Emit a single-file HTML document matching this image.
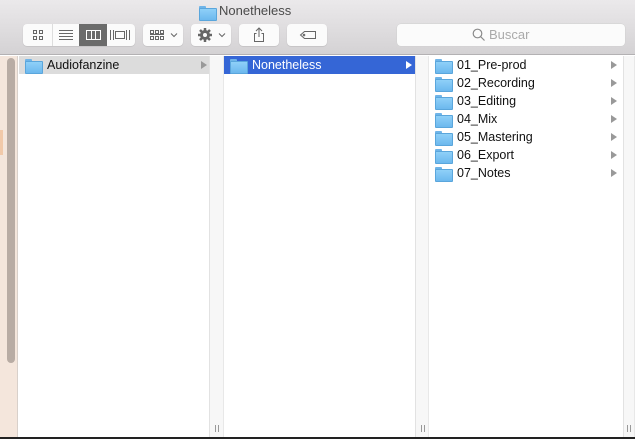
<!DOCTYPE html><html><head><style>
*{margin:0;padding:0;box-sizing:border-box}
body{width:635px;height:439px;overflow:hidden;background:#fff;font-family:"Liberation Sans",sans-serif;position:relative}
.tb{position:absolute;left:0;top:0;width:635px;height:55px;background:linear-gradient(#ebe9eb,#d4d2d4);border-bottom:1px solid #b3b1b3}
.title{position:absolute;top:3px;left:199px;font-size:13px;color:#4a4a4a}
.btn{position:absolute;top:24px;height:22px;background:#fbfbfb;border-radius:4px;box-shadow:0 0.5px 1px rgba(0,0,0,.15)}
.seg{position:absolute;top:0;height:22px}
.f{position:absolute;width:16px;height:13px}
.f:before{content:"";position:absolute;left:0;top:0;width:7px;height:3px;background:#6fb4e8;border-radius:1px 1px 0 0}
.f:after{content:"";position:absolute;left:0;top:2px;width:16px;height:11px;background:linear-gradient(#8fd0f8,#6cb8ee);border:1px solid #5aa6dc;border-radius:1px}
.row{position:absolute;height:18px;font-size:12.5px;line-height:18px;color:#111}
.row .f{left:6px;top:3px}
.row span{position:absolute;left:28px;top:0}
.ar{position:absolute;width:0;height:0;border-left:6px solid #999;border-top:4px solid transparent;border-bottom:4px solid transparent;top:5px}
.div{position:absolute;top:56px;height:381px;background:#f7f7f7;border-left:1px solid #e2e2e2;border-right:1px solid #e8e8e8}
.div i{position:absolute;bottom:5px;left:5px;width:1px;height:7px;background:#999;box-shadow:3px 0 0 #999}
</style></head><body>
<div class="tb">
<div class="title"><div class="f" style="left:0;top:3px;position:absolute"></div><span style="position:absolute;left:20px;top:0;white-space:nowrap">Nonetheless</span></div>
<div class="btn" style="left:23px;width:112px">
 <div class="seg" style="left:29px;width:1px;background:#ddd"></div>
 <div class="seg" style="left:56px;width:28px;background:#6b6b6b"></div>
 <svg width="112" height="22" style="position:absolute;left:0;top:0" fill="none" stroke="#666" stroke-width="1">
  <rect x="10.5" y="6.5" width="3" height="3"/><rect x="16.5" y="6.5" width="3" height="3"/><rect x="10.5" y="12.5" width="3" height="3"/><rect x="16.5" y="12.5" width="3" height="3"/>
  <path d="M36 6.5h14M36 9.5h14M36 12.5h14M36 15.5h14"/>
  <rect x="63.5" y="6.5" width="14" height="9" stroke="#fff"/><path d="M68.5 7v8M72.5 7v8" stroke="#fff"/>
  <path d="M87.5 6v10M90.5 6v10M103.5 6v10M106.5 6v10"/><rect x="92.5" y="7.5" width="9" height="7"/>
 </svg>
</div>
<div class="btn" style="left:143px;width:40px"><svg width="40" height="22" fill="none" stroke="#666"><rect x="7.5" y="6.5" width="3" height="3"/><rect x="12.5" y="6.5" width="3" height="3"/><rect x="17.5" y="6.5" width="3" height="3"/><rect x="7.5" y="12.5" width="3" height="3"/><rect x="12.5" y="12.5" width="3" height="3"/><rect x="17.5" y="12.5" width="3" height="3"/><path d="M7 10.5h14"/><path d="M28 9.5l3 3 3-3"/></svg></div>
<div class="btn" style="left:191px;width:40px"><svg width="40" height="22"><g fill="#666"><circle cx="14" cy="11" r="5"/><g stroke="#666" stroke-width="2.5"><path d="M14 4v14M7 11h14M9 6l10 10M19 6l-10 10"/></g></g><circle cx="14" cy="11" r="2" fill="#fbfbfb"/><path d="M28 9.5l3 3 3-3" fill="none" stroke="#666"/></svg></div>
<div class="btn" style="left:239px;width:40px"><svg width="40" height="22" fill="none" stroke="#666"><path d="M17.5 9.5h-2v8h9v-8h-2M20 4v9M17 7l3-3 3 3"/></svg></div>
<div class="btn" style="left:287px;width:40px"><svg width="40" height="22" fill="none" stroke="#666"><path d="M13.5 11l4-3.5h11v7h-11z"/><circle cx="17" cy="11" r=".8"/></svg></div>
<div class="btn" style="left:397px;width:228px;box-shadow:0 0 0 .5px #d0d0d0"><svg width="14" height="14" style="position:absolute;left:75px;top:4px" fill="none" stroke="#8a8a8a" stroke-width="1.2"><circle cx="5.5" cy="5.5" r="4.3"/><path d="M8.5 8.5l4 4"/></svg><span style="position:absolute;left:92px;top:3px;font-size:13px;color:#aaa">Buscar</span></div>
</div>
<div style="position:absolute;left:0;top:56px;width:18px;height:381px;background:#f4e6dc;border-right:1px solid #d8d0ca"></div>
<div style="position:absolute;left:0;top:130px;width:3px;height:25px;background:#f1c9a9"></div>
<div style="position:absolute;left:7px;top:58px;width:8px;height:305px;background:#b8aca4;border-radius:4px"></div>
<div class="row" style="left:19px;top:56px;width:190px;background:#dcdcdc"><div class="f"></div><span>Audiofanzine</span><div class="ar" style="left:182px"></div></div>
<div class="div" style="left:209px;width:15px"><i></i></div>
<div class="row" style="left:224px;top:56px;width:191px;background:#3566d6;color:#fff"><div class="f"></div><span>Nonetheless</span><div class="ar" style="left:182px;border-left-color:#fff"></div></div>
<div class="div" style="left:415px;width:14px"><i></i></div>
<div class="row" style="left:429px;top:56px;width:194px"><div class="f"></div><span>01_Pre-prod</span><div class="ar" style="left:182px"></div></div>
<div class="row" style="left:429px;top:74px;width:194px"><div class="f"></div><span>02_Recording</span><div class="ar" style="left:182px"></div></div>
<div class="row" style="left:429px;top:92px;width:194px"><div class="f"></div><span>03_Editing</span><div class="ar" style="left:182px"></div></div>
<div class="row" style="left:429px;top:110px;width:194px"><div class="f"></div><span>04_Mix</span><div class="ar" style="left:182px"></div></div>
<div class="row" style="left:429px;top:128px;width:194px"><div class="f"></div><span>05_Mastering</span><div class="ar" style="left:182px"></div></div>
<div class="row" style="left:429px;top:146px;width:194px"><div class="f"></div><span>06_Export</span><div class="ar" style="left:182px"></div></div>
<div class="row" style="left:429px;top:164px;width:194px"><div class="f"></div><span>07_Notes</span><div class="ar" style="left:182px"></div></div>
<div class="div" style="left:623px;width:12px"><i style="left:3px"></i></div>
<div style="position:absolute;left:0;top:437px;width:635px;height:2px;background:#222"></div>
</body></html>
